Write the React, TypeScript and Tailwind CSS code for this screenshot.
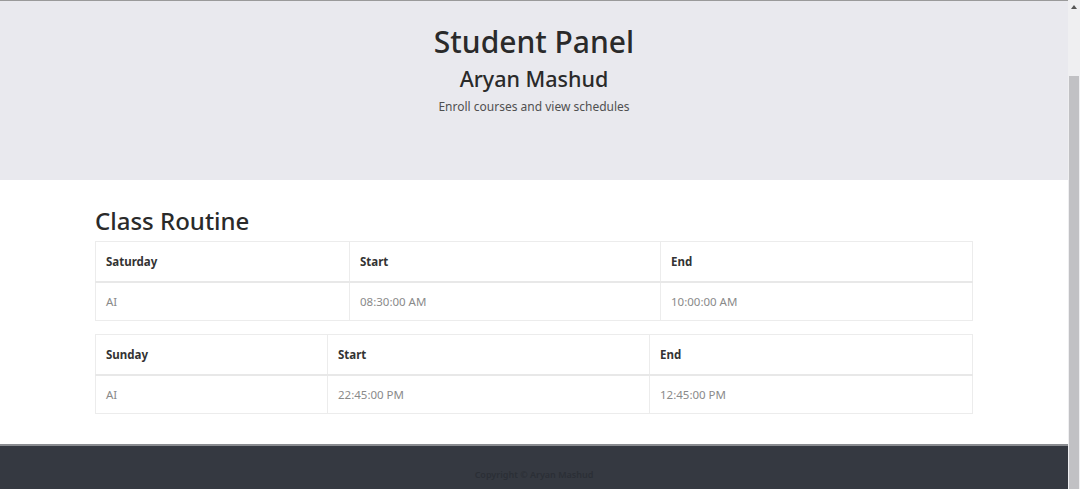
import React from "react";

type Row = { course: string; start: string; end: string };
type Day = { day: string; cols: [string, string, string]; rows: Row[] };

const routine: Day[] = [
  {
    day: "Saturday",
    cols: ["w-[254px]", "w-[311px]", "w-[312px]"],
    rows: [{ course: "AI", start: "08:30:00 AM", end: "10:00:00 AM" }],
  },
  {
    day: "Sunday",
    cols: ["w-[232px]", "w-[322px]", "w-[323px]"],
    rows: [{ course: "AI", start: "22:45:00 PM", end: "12:45:00 PM" }],
  },
];

const App: React.FC = () => {
  return (
    <div
      className="flex h-[489px] w-[1080px] overflow-hidden bg-white text-[#212529]"
      style={{ fontFamily: '"Noto Sans", "Open Sans", sans-serif' }}
    >
      <div className="flex flex-1 flex-col">
        {/* Header */}
        <div className="h-[180px] border-t border-[#9a9a9a] bg-[#e9e9ee] pt-[22px] text-center">
          <h1 className="text-[30px] leading-[37px] font-medium text-[#2a2a2a]">
            Student Panel
          </h1>
          <h2 className="mt-[4px] text-[21.5px] leading-[29px] font-medium text-[#2a2a2a]">
            Aryan Mashud
          </h2>
          <p className="mt-[6px] text-[12px] leading-[16px] text-[#505050]">
            Enroll courses and view schedules
          </p>
        </div>

        {/* Routine */}
        <div className="flex-1 px-[95px] pt-[25px]">
          <h3 className="mb-[4px] text-[24px] leading-[32px] font-medium text-[#2a2a2a]">
            Class Routine
          </h3>
          <div className="flex flex-col gap-[13px]">
            {routine.map((d) => (
              <table
                key={d.day}
                className="w-[877px] table-fixed border-collapse border border-[#ececec] text-[11.5px]"
              >
                <thead>
                  <tr className="h-[40px] border-b-2 border-[#e8e8e8]">
                    <th className={`${d.cols[0]} border-r border-[#ececec] px-[10px] text-left font-bold text-[#333]`}>
                      {d.day}
                    </th>
                    <th className={`${d.cols[1]} border-r border-[#ececec] px-[10px] text-left font-bold text-[#333]`}>
                      Start
                    </th>
                    <th className={`${d.cols[2]} px-[10px] text-left font-bold text-[#333]`}>End</th>
                  </tr>
                </thead>
                <tbody>
                  {d.rows.map((r, i) => (
                    <tr key={i} className="h-[39px] text-[#8a8a8a]">
                      <td className="border-r border-[#ececec] px-[10px]">{r.course}</td>
                      <td className="border-r border-[#ececec] px-[10px]">{r.start}</td>
                      <td className="px-[10px]">{r.end}</td>
                    </tr>
                  ))}
                </tbody>
              </table>
            ))}
          </div>
        </div>

        {/* Footer */}
        <div className="h-[45px] border-t-2 border-[#8a8c90] bg-[#353941] pt-[22px] text-center">
          <p className="text-[9px] leading-[13px] font-semibold text-[#2b2f36]">
            Copyright © Aryan Mashud
          </p>
        </div>
      </div>

      {/* Scrollbar */}
      <div className="flex w-[13px] flex-col bg-[#efeff1]">
        <div className="flex h-[14px] items-center justify-center">
          <div className="h-0 w-0 border-x-[3px] border-b-[4px] border-x-transparent border-b-[#555]" />
        </div>
        <div className="mx-[1px] mt-[62px] flex-1 bg-[#c1c1c4]" />
      </div>
    </div>
  );
};

export default App;
